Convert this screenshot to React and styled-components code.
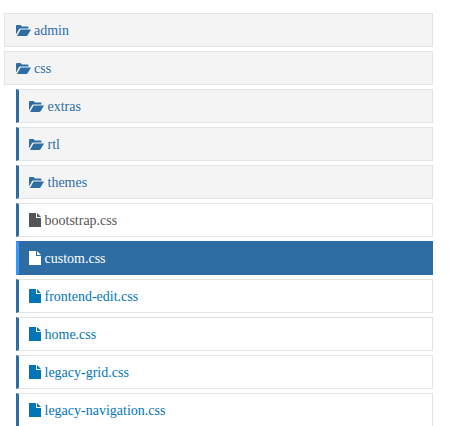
import React from "react";
import styled, { createGlobalStyle } from "styled-components";

const GlobalStyle = createGlobalStyle`
  html, body {
    margin: 0;
    height: 100%;
    overflow: hidden;
    background: #fff;
  }
`;

const Tree = styled.div`
  display: flex;
  flex-direction: column;
  gap: 4px;
  width: 429px;
  padding: 13px 0 0 4px;
  font-family: "Liberation Serif", "Times New Roman", serif;
  font-size: 14px;
`;

const Children = styled.div`
  display: flex;
  flex-direction: column;
  gap: 4px;
  margin-left: 12px;
`;

const Row = styled.div`
  display: flex;
  align-items: center;
  box-sizing: border-box;
  height: 34px;
  padding-left: ${(p) => (p.$nested ? "10px" : "11px")};
  border: 1px solid ${(p) => (p.$active ? "#2e6da4" : "#e3e3e3")};
  border-left: ${(p) => {
    if (p.$active) return "3px solid #3399ff";
    if (p.$nested) return "3px solid #2e6da4";
    return "1px solid #e3e3e3";
  }};
  background: ${(p) =>
    p.$active ? "#2e6da4" : p.$folder ? "#f4f4f4" : "#fff"};
  color: ${(p) => {
    if (p.$active) return "#fff";
    if (p.$folder) return "#2e6da4";
    return p.$plain ? "#555" : "#0275b8";
  }};
`;

const Label = styled.span`
  padding-top: 2px;
`;

const FolderSvg = styled.svg`
  flex: none;
  width: 15px;
  height: 11px;
  margin-right: ${(p) => (p.$nested ? "3.5px" : "3px")};
  fill: #2e6da4;
`;

const FileSvg = styled.svg`
  flex: none;
  width: 12px;
  height: 14px;
  margin-right: 3.5px;
  fill: ${(p) => p.$color};
`;

function FolderIcon({ nested }) {
  return (
    <FolderSvg viewBox="0 0 15 11" $nested={nested}>
      <path d="M0 10V1Q0 0 1 0H4.5L6 1.5H11.5Q12.5 1.5 12.5 2.5V3.5H4.2Q3.4 3.5 3 4.2L0 9.4Z" />
      <path d="M4.6 4.6H15L11.6 10.2Q11.1 11 10.2 11H1Z" />
    </FolderSvg>
  );
}

function FileIcon({ color }) {
  return (
    <FileSvg viewBox="0 0 12 14" $color={color}>
      <path d="M0 0H7V5H12V14H0Z" />
      <path d="M8 0L12 4H8Z" />
    </FileSvg>
  );
}

const folders = ["extras", "rtl", "themes"];
const files = [
  { name: "bootstrap.css", plain: true, color: "#555" },
  { name: "custom.css", active: true, color: "#fff" },
  { name: "frontend-edit.css", color: "#0275b8" },
  { name: "home.css", color: "#0275b8" },
  { name: "legacy-grid.css", color: "#0275b8" },
  { name: "legacy-navigation.css", color: "#0275b8" },
];

export default function App() {
  return (
    <>
      <GlobalStyle />
      <Tree>
        <Row $folder>
          <FolderIcon />
          <Label>admin</Label>
        </Row>
        <Row $folder>
          <FolderIcon />
          <Label>css</Label>
        </Row>
        <Children>
          {folders.map((name) => (
            <Row key={name} $folder $nested>
              <FolderIcon nested />
              <Label>{name}</Label>
            </Row>
          ))}
          {files.map((f) => (
            <Row key={f.name} $nested $plain={f.plain} $active={f.active}>
              <FileIcon color={f.color} />
              <Label>{f.name}</Label>
            </Row>
          ))}
        </Children>
      </Tree>
    </>
  );
}
